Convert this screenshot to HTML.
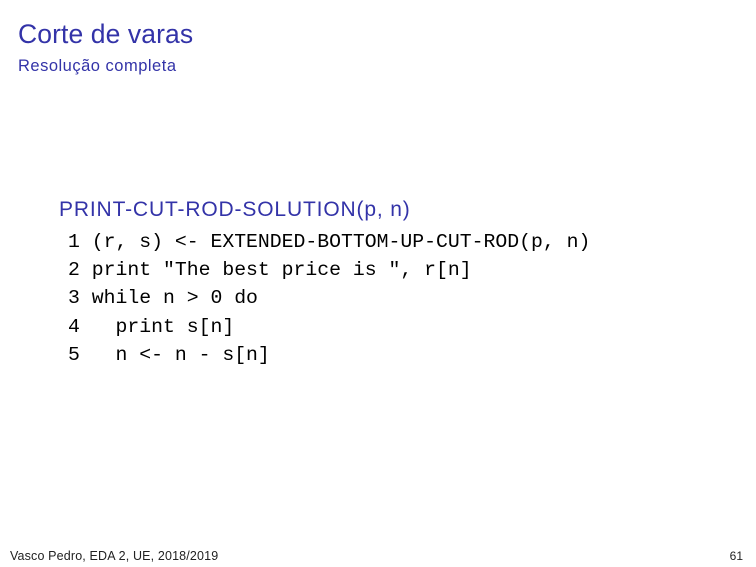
<!DOCTYPE html>
<html><head><meta charset="utf-8"><style>
body{margin:0;width:756px;height:567px;background:#fff;position:relative;overflow:hidden;font-family:"Liberation Sans",sans-serif}
div{position:absolute;white-space:pre;line-height:normal}
.c{color:#3333a8}
</style></head><body>
<div class="c" style="left:18px;top:19px;font-size:26.5px;letter-spacing:0.1px">Corte de varas</div>
<div class="c" style="left:18px;top:57px;font-size:16.5px;letter-spacing:0.5px">Resolução completa</div>
<div class="c" style="left:59px;top:198px;font-size:21px;letter-spacing:0.85px">PRINT-CUT-ROD-SOLUTION(p, n)</div>
<div style="left:68px;top:228px;font-family:'Liberation Mono',monospace;font-size:19.8px;line-height:28.2px;color:#000">1 (r, s) &lt;- EXTENDED-BOTTOM-UP-CUT-ROD(p, n)
2 print "The best price is ", r[n]
3 while n &gt; 0 do
4   print s[n]
5   n &lt;- n - s[n]</div>
<div style="left:10px;top:549px;font-size:12.5px;color:#222;letter-spacing:0.15px">Vasco Pedro, EDA 2, UE, 2018/2019</div>
<div style="right:13px;top:549px;font-size:12px;color:#222">61</div>
</body></html>
